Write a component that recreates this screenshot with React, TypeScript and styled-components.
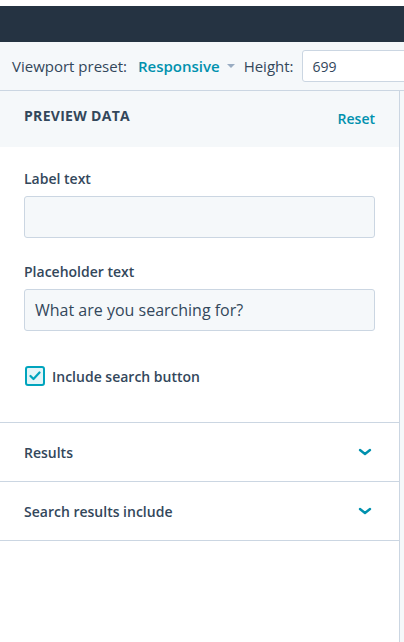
import { createGlobalStyle } from "styled-components";
import styled from "styled-components";

const GlobalStyle = createGlobalStyle`
  html, body {
    margin: 0;
    padding: 0;
    background: #ffffff;
  }
  body {
    font-family: "Open Sans", "Noto Sans", sans-serif;
    color: #33475b;
  }
`;

const Page = styled.div`
  width: 404px;
  height: 642px;
  display: flex;
  flex-direction: column;
  overflow: hidden;
  padding-top: 6px;
  box-sizing: border-box;
  background: #ffffff;
`;

const NavBar = styled.div`
  height: 36px;
  background: #253342;
  flex-shrink: 0;
`;

const Toolbar = styled.div`
  height: 48px;
  background: #f5f8fa;
  border-bottom: 1px solid #cbd6e2;
  display: flex;
  align-items: center;
  padding-left: 12px;
  gap: 8px;
  flex-shrink: 0;
  white-space: nowrap;
  font-size: 15px;
`;

const ToolLabel = styled.span`
  color: #33475b;
`;

const Preset = styled.span`
  color: #0091ae;
  font-weight: 600;
  display: flex;
  align-items: center;
  gap: 7px;
  margin-left: 3px;
  margin-right: 1px;
`;

const Caret = styled.span`
  width: 0;
  height: 0;
  border-left: 4px solid transparent;
  border-right: 4px solid transparent;
  border-top: 4px solid #99acc2;
`;

const HeightInput = styled.div`
  height: 32px;
  width: 140px;
  box-sizing: border-box;
  border: 1px solid #cbd6e2;
  border-radius: 3px;
  background: #ffffff;
  display: flex;
  align-items: center;
  padding-left: 10px;
  font-size: 14px;
  flex-shrink: 0;
`;

const Body = styled.div`
  flex: 1;
  display: flex;
  background: #f5f8fa;
`;

const Panel = styled.div`
  width: 399px;
  background: #ffffff;
  border-right: 1px solid #cbd6e2;
  display: flex;
  flex-direction: column;
`;

const PanelHeader = styled.div`
  height: 56px;
  background: #f5f8fa;
  display: flex;
  justify-content: space-between;
  padding: 0 24px;
`;

const HeaderTitle = styled.span`
  font-size: 14px;
  font-weight: 700;
  letter-spacing: 0.3px;
  text-transform: uppercase;
  margin-top: 15px;
`;

const ResetLink = styled.span`
  font-size: 14px;
  font-weight: 600;
  color: #0091ae;
  margin-top: 18px;
`;

const Fields = styled.div`
  padding: 22px 24px 36px;
  border-bottom: 1px solid #cbd6e2;
  display: flex;
  flex-direction: column;
`;

const Field = styled.div`
  display: flex;
  flex-direction: column;
  gap: 7px;
  margin-bottom: 24px;
`;

const FieldLabel = styled.label`
  font-size: 14px;
  font-weight: 600;
  line-height: 20px;
`;

const TextBox = styled.div`
  height: 42px;
  box-sizing: border-box;
  border: 1px solid #cbd6e2;
  border-radius: 3px;
  background: #f5f8fa;
  padding: 0 10px;
  display: flex;
  align-items: center;
  font-size: 16px;
  color: #33475b;
`;

const CheckRow = styled.div`
  display: flex;
  align-items: center;
  gap: 7px;
  margin-top: 11px;
  padding-left: 1px;
`;

const CheckBox = styled.span`
  width: 20px;
  height: 20px;
  box-sizing: border-box;
  border: 2px solid #00a4bd;
  border-radius: 3px;
  background: #e5f5f8;
  display: flex;
  align-items: center;
  justify-content: center;
`;

const CheckLabel = styled.span`
  font-size: 14px;
  font-weight: 600;
`;

const AccordionRow = styled.div`
  height: 58px;
  border-bottom: 1px solid #cbd6e2;
  display: flex;
  align-items: center;
  justify-content: space-between;
  padding: 0 27px 0 24px;
  font-size: 14px;
  font-weight: 600;
`;

const Chevron = () => (
  <svg width="14" height="10" viewBox="0 0 14 10">
    <path d="M2 3l5 4 5-4" fill="none" stroke="#0091ae" strokeWidth="2.4" strokeLinecap="round" strokeLinejoin="round" />
  </svg>
);

const App = () => {
  return (
    <Page>
      <GlobalStyle />
      <NavBar />
      <Toolbar>
        <ToolLabel>Viewport preset:</ToolLabel>
        <Preset>
          Responsive
          <Caret />
        </Preset>
        <ToolLabel>Height:</ToolLabel>
        <HeightInput>699</HeightInput>
      </Toolbar>
      <Body>
        <Panel>
          <PanelHeader>
            <HeaderTitle>Preview data</HeaderTitle>
            <ResetLink>Reset</ResetLink>
          </PanelHeader>
          <Fields>
            <Field>
              <FieldLabel>Label text</FieldLabel>
              <TextBox />
            </Field>
            <Field>
              <FieldLabel>Placeholder text</FieldLabel>
              <TextBox>What are you searching for?</TextBox>
            </Field>
            <CheckRow>
              <CheckBox>
                <svg width="12" height="10" viewBox="0 0 12 10">
                  <path d="M1.5 5l3 3 6-6.5" fill="none" stroke="#00a4bd" strokeWidth="2.2" strokeLinecap="round" strokeLinejoin="round" />
                </svg>
              </CheckBox>
              <CheckLabel>Include search button</CheckLabel>
            </CheckRow>
          </Fields>
          <AccordionRow>
            Results
            <Chevron />
          </AccordionRow>
          <AccordionRow>
            Search results include
            <Chevron />
          </AccordionRow>
        </Panel>
      </Body>
    </Page>
  );
};

export default App;
